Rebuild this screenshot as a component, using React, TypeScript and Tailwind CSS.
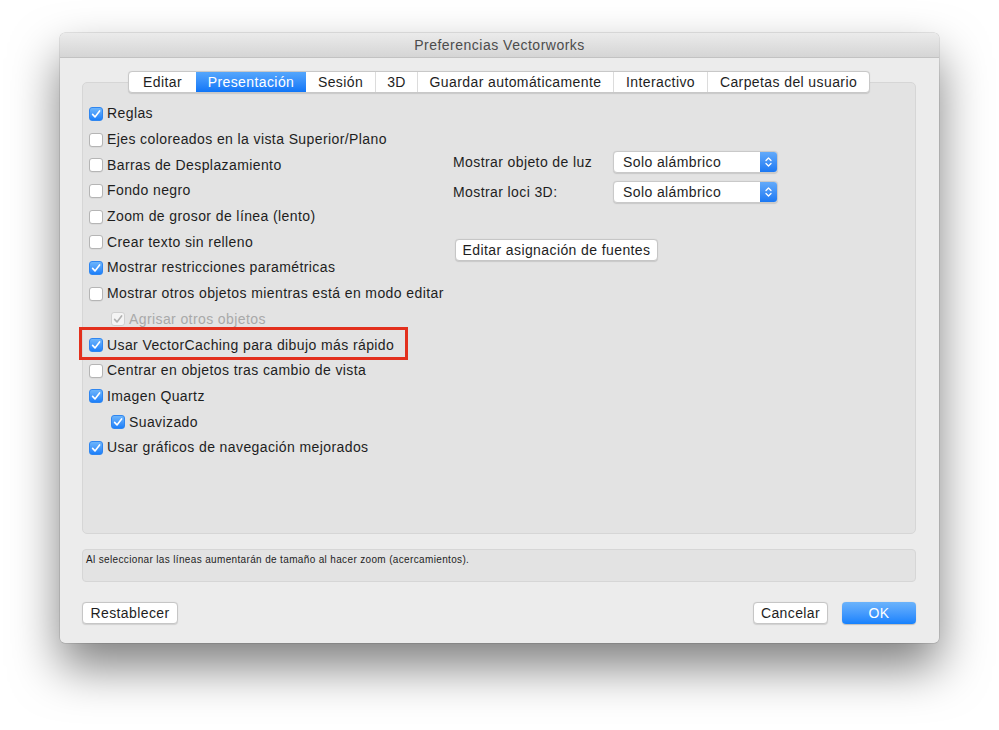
import React from "react";

const Check = ({ color = "white" }: { color?: string }) => (
  <svg width="14" height="14" viewBox="0 0 14 14" className="block">
    <path d="M3.6 7.4 L6 9.9 L10.6 3.9" fill="none" stroke={color} strokeWidth="1.6" strokeLinecap="round" strokeLinejoin="round" />
  </svg>
);

function Box({ checked, disabled }: { checked: boolean; disabled?: boolean }) {
  if (disabled) {
    return (
      <div className="w-[14px] h-[14px] rounded-[3px] border border-[#d0d0d0] bg-[#f4f4f4] shrink-0">
        <div className="-m-px">
          <Check color="#b0b0b0" />
        </div>
      </div>
    );
  }
  if (checked) {
    return (
      <div className="w-[14px] h-[14px] rounded-[3px] bg-gradient-to-b from-[#6db5fb] to-[#1a7ff9] border border-[#2f86f0] shrink-0">
        <div className="-m-px">
          <Check />
        </div>
      </div>
    );
  }
  return <div className="w-[14px] h-[14px] rounded-[3px] border border-[#b5b5b5] bg-white shrink-0 shadow-[0_0.5px_0.5px_rgba(0,0,0,0.08)]" />;
}

const rows: { t: string; c: boolean; indent?: boolean; disabled?: boolean; hl?: boolean }[] = [
  { t: "Reglas", c: true },
  { t: "Ejes coloreados en la vista Superior/Plano", c: false },
  { t: "Barras de Desplazamiento", c: false },
  { t: "Fondo negro", c: false },
  { t: "Zoom de grosor de línea (lento)", c: false },
  { t: "Crear texto sin relleno", c: false },
  { t: "Mostrar restricciones paramétricas", c: true },
  { t: "Mostrar otros objetos mientras está en modo editar", c: false },
  { t: "Agrisar otros objetos", c: true, indent: true, disabled: true },
  { t: "Usar VectorCaching para dibujo más rápido", c: true, hl: true },
  { t: "Centrar en objetos tras cambio de vista", c: false },
  { t: "Imagen Quartz", c: true },
  { t: "Suavizado", c: true, indent: true },
  { t: "Usar gráficos de navegación mejorados", c: true },
];

const tabs: { t: string; w: number; sel?: boolean }[] = [
  { t: "Editar", w: 67 },
  { t: "Presentación", w: 110, sel: true },
  { t: "Sesión", w: 69 },
  { t: "3D", w: 42 },
  { t: "Guardar automáticamente", w: 196 },
  { t: "Interactivo", w: 94 },
  { t: "Carpetas del usuario", w: 162 },
];

const T = "text-[14px] tracking-[0.4px]";

function Select() {
  return (
    <div className="w-[165px] h-[22px] rounded-[4px] bg-white border border-[#c9c9c9] shadow-[0_0.5px_1px_rgba(0,0,0,0.12)] flex items-center overflow-hidden">
      <span className={"flex-1 pl-[9px] text-[#1e1e1e] " + T}>Solo alámbrico</span>
      <div className="w-[17px] h-full bg-gradient-to-b from-[#62aafa] to-[#1a78f3] flex items-center justify-center">
        <svg width="9" height="14" viewBox="0 0 9 14">
          <path d="M2 5.5 L4.5 3 L7 5.5" fill="none" stroke="white" strokeWidth="1.3" strokeLinecap="round" strokeLinejoin="round" />
          <path d="M2 8.5 L4.5 11 L7 8.5" fill="none" stroke="white" strokeWidth="1.3" strokeLinecap="round" strokeLinejoin="round" />
        </svg>
      </div>
    </div>
  );
}

function Btn({ children, w, blue }: { children: React.ReactNode; w: number; blue?: boolean }) {
  return (
    <div
      style={{ width: w }}
      className={
        (blue
          ? "h-[22px] rounded-[4px] bg-gradient-to-b from-[#6bb3fb] to-[#1381fd] text-white flex items-center justify-center shadow-[0_0.5px_1px_rgba(0,0,0,0.2)] "
          : "h-[22px] rounded-[4px] bg-white border border-[#c6c6c6] text-[#1e1e1e] flex items-center justify-center shadow-[0_0.5px_1px_rgba(0,0,0,0.12)] ") + T
      }
    >
      {children}
    </div>
  );
}

export default function App() {
  return (
    <div className="w-[999px] h-[730px] bg-white pl-[60px] pt-[33px] overflow-hidden" style={{ fontFamily: '"Liberation Sans", Arial, sans-serif' }}>
      <div className="w-[879px] h-[610px] rounded-[5px] bg-[#ececec] shadow-[0_24px_48px_rgba(0,0,0,0.5),0_0_0_0.5px_rgba(0,0,0,0.18)] flex flex-col overflow-hidden">
        <div className="h-[25px] shrink-0 bg-gradient-to-b from-[#ebebeb] to-[#d5d5d5] border-b border-[#c2c2c2] flex items-center justify-center text-[14px] tracking-[0.5px] text-[#4c4c4c]">
          Preferencias Vectorworks
        </div>
        <div className="flex flex-col px-[22px] pr-[23px]">
          <div className="relative z-10 mt-[13px] -mb-[11px] ml-[46px] flex h-[22px] w-max rounded-[4px] bg-white border border-[#c8c8c8] shadow-[0_0.5px_1px_rgba(0,0,0,0.12)] overflow-hidden">
            {tabs.map((tb, i) => (
              <div
                key={tb.t}
                style={{ width: tb.w }}
                className={
                  (tb.sel
                    ? "bg-gradient-to-b from-[#54a6fc] to-[#0d75f7] text-white "
                    : "text-[#1e1e1e] ") +
                  (i > 0 && !tb.sel && !tabs[i - 1].sel ? "border-l border-[#dcdcdc] " : "") +
                  "h-full flex items-center justify-center " + T
                }
              >
                {tb.t}
              </div>
            ))}
          </div>
          <div className="h-[452px] rounded-[5px] bg-[#e3e3e3] border border-[#d6d6d6] flex pt-[18px] pl-[6px]">
            <div className="w-[365px] flex flex-col">
              {rows.map((r) =>
                r.hl ? (
                  <div key={r.t} className="h-[25.7px] flex items-center -ml-[10px]">
                    <div className="h-[33px] w-[329px] -mt-[3px] border-[3px] border-[#e3301d] flex items-center gap-[4px] pl-[7px] pt-[3px]">
                      <Box checked={r.c} />
                      <span className={"text-[#1e1e1e] whitespace-nowrap " + T}>{r.t}</span>
                    </div>
                  </div>
                ) : (
                  <div key={r.t} className={"h-[25.7px] flex items-center gap-[4px] " + (r.indent ? "pl-[22px]" : "")}>
                    <Box checked={r.c} disabled={r.disabled} />
                    <span className={"whitespace-nowrap " + T + (r.disabled ? " text-[#a9a9a9]" : " text-[#1e1e1e]")}>{r.t}</span>
                  </div>
                )
              )}
            </div>
            <div className="flex flex-col pt-[50px] -ml-[1px]">
              <div className="flex items-center h-[22px]">
                <span className={"w-[160px] text-[#1e1e1e] " + T}>Mostrar objeto de luz</span>
                <Select />
              </div>
              <div className="flex items-center h-[22px] mt-[8px]">
                <span className={"w-[160px] text-[#1e1e1e] " + T}>Mostrar loci 3D:</span>
                <Select />
              </div>
              <div className="mt-[36px] ml-[2px]">
                <Btn w={203}>Editar asignación de fuentes</Btn>
              </div>
            </div>
          </div>
          <div className="mt-[15px] h-[33px] rounded-[4px] bg-[#e3e3e3] border border-[#d6d6d6] pl-[3px] pt-[4px] text-[10px] tracking-[0.35px] text-[#1e1e1e] leading-[12px]">
            Al seleccionar las líneas aumentarán de tamaño al hacer zoom (acercamientos).
          </div>
          <div className="mt-[20px] flex items-center">
            <Btn w={96}>Restablecer</Btn>
            <div className="flex-1" />
            <Btn w={75}>Cancelar</Btn>
            <div className="w-[14px]" />
            <Btn w={74} blue>
              OK
            </Btn>
          </div>
        </div>
      </div>
    </div>
  );
}
